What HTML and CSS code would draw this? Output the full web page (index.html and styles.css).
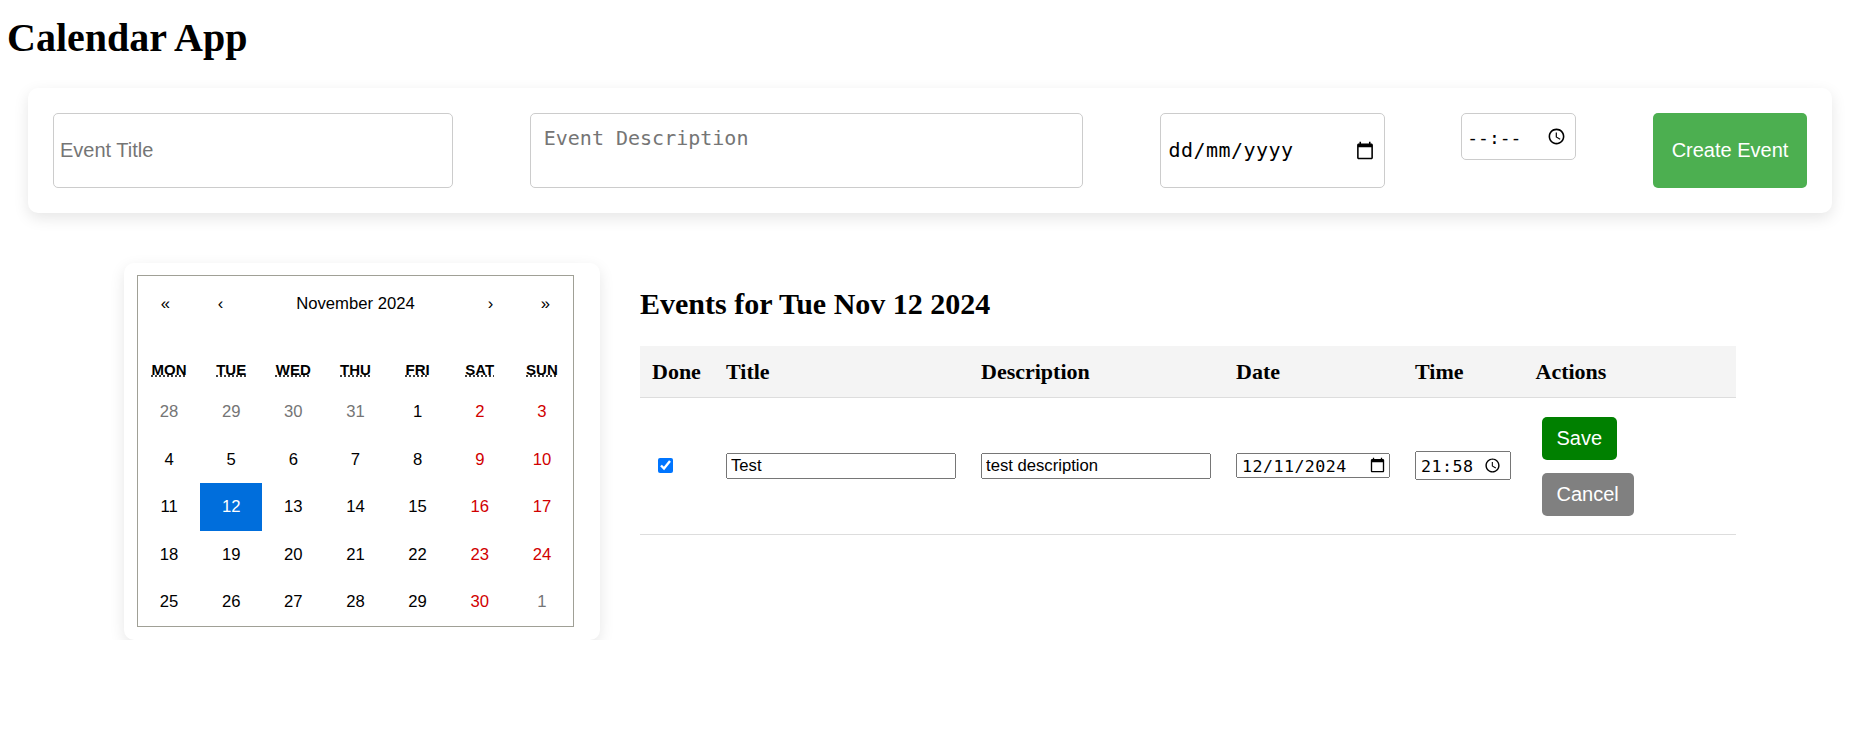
FILE: index.html
```html
<!DOCTYPE html>
<html lang="en-GB">
<head>
<meta charset="utf-8">
<title>Calendar App</title>
<link rel="stylesheet" href="styles.css">
</head>
<body>
<h1 class="app-title">Calendar App</h1>
<form class="event-form">
  <input class="field field-title" type="text" placeholder="Event Title">
  <textarea class="field field-desc" placeholder="Event Description"></textarea>
  <label class="dt">
    <input class="field field-date" type="date">
    <span class="dt-text dt-form-date">dd/mm/yyyy</span>
  </label>
  <label class="dt">
    <input class="field field-time" type="time">
    <span class="dt-text dt-form-time">--:--</span>
  </label>
  <button class="create-btn" type="button">Create Event</button>
</form>
<main class="content">
  <section class="calendar-card">
    <div class="calendar">
      <div class="nav">
        <span class="nav-btn">«</span><span class="nav-btn">‹</span>
        <span class="nav-label">November 2024</span>
        <span class="nav-btn">›</span><span class="nav-btn">»</span>
      </div>
      <div class="weekdays">
        <abbr>MON</abbr><abbr>TUE</abbr><abbr>WED</abbr><abbr>THU</abbr><abbr>FRI</abbr><abbr>SAT</abbr><abbr>SUN</abbr>
      </div>
      <div class="days">
        <span class="day muted">28</span><span class="day muted">29</span><span class="day muted">30</span><span class="day muted">31</span><span class="day">1</span><span class="day weekend">2</span><span class="day weekend">3</span>
        <span class="day">4</span><span class="day">5</span><span class="day">6</span><span class="day">7</span><span class="day">8</span><span class="day weekend">9</span><span class="day weekend">10</span>
        <span class="day">11</span><span class="day active">12</span><span class="day">13</span><span class="day">14</span><span class="day">15</span><span class="day weekend">16</span><span class="day weekend">17</span>
        <span class="day">18</span><span class="day">19</span><span class="day">20</span><span class="day">21</span><span class="day">22</span><span class="day weekend">23</span><span class="day weekend">24</span>
        <span class="day">25</span><span class="day">26</span><span class="day">27</span><span class="day">28</span><span class="day">29</span><span class="day weekend">30</span><span class="day muted">1</span>
      </div>
    </div>
  </section>
  <section class="events">
    <h2 class="events-title">Events for Tue Nov 12 2024</h2>
    <table class="events-table">
      <colgroup>
        <col class="c-done"><col class="c-title"><col class="c-desc"><col class="c-date"><col class="c-time"><col class="c-actions">
      </colgroup>
      <thead>
        <tr><th>Done</th><th>Title</th><th>Description</th><th>Date</th><th>Time</th><th>Actions</th></tr>
      </thead>
      <tbody>
        <tr>
          <td><input class="done-check" type="checkbox" checked></td>
          <td><input class="cell-text" type="text" value="Test"></td>
          <td><input class="cell-text" type="text" value="test description"></td>
          <td>
            <label class="dt">
              <input class="cell-date" type="date" value="2024-11-12">
              <span class="dt-text dt-cell-date">12/11/2024</span>
            </label>
          </td>
          <td>
            <label class="dt">
              <input class="cell-time" type="time" value="21:58">
              <span class="dt-text dt-cell-time">21:58</span>
            </label>
          </td>
          <td>
            <div class="actions">
              <button class="btn btn-save" type="button">Save</button>
              <button class="btn btn-cancel" type="button">Cancel</button>
            </div>
          </td>
        </tr>
      </tbody>
    </table>
  </section>
</main>
</body>
</html>
```
FILE: styles.css
```css
* { box-sizing: border-box; }
body { margin: 0; padding: 0 8px; background: #fff; color: #000; font-family: "Liberation Serif", serif; }
.app-title { margin: 0 0 0 -1px; padding: 20px 0 0; font-size: 40px; line-height: 36px; height: 88px; }
.event-form {
  display: flex; justify-content: space-between; align-items: flex-start;
  margin: 0 17px 0 20px; padding: 25px; height: 125px; background: #fff;
  border-radius: 10px; box-shadow: 0 5px 15px rgba(0,0,0,.1);
}
.field { display: block; border: 1px solid #ccc; border-radius: 5px; background: #fff; margin: 0; }
.field-title { width: 400px; height: 75px; padding: 6px; font: 20px "Liberation Sans", sans-serif; }
.field-desc { width: 553px; height: 75px; padding: 13px; font: 20px/23px "DejaVu Sans Mono", monospace; resize: none; }
.field-date { width: 225px; height: 75px; padding: 6px 7px 6px 6px; font: 20px "DejaVu Sans Mono", monospace; }
.field-time { width: 115px; height: 47px; padding: 6px; font: 18px "DejaVu Sans Mono", monospace; }
.dt { display: block; position: relative; }
.dt input::-webkit-datetime-edit { opacity: 0; }
.dt input::-webkit-datetime-edit-fields-wrapper { display: none; }
.dt-text { position: absolute; left: 9px; top: calc(50% - 1px); transform: translateY(-50%); pointer-events: none; color: #000; font-family: "DejaVu Sans Mono", monospace; letter-spacing: .45px; white-space: nowrap; }
.dt-form-date { font-size: 20px; }
.dt-form-time { font-size: 18px; left: 6px; top: 50%; letter-spacing: 0; }
.dt-cell-date, .dt-cell-time { font-size: 16.66px; left: 6px; top: 50%; }
.create-btn {
  width: 154px; height: 75px; border: 0; border-radius: 5px; background: #4caf50; color: #fff;
  font: 20px "Liberation Sans", sans-serif;
}
.content { display: flex; gap: 40px; margin: 50px 0 0 116px; align-items: flex-start; }
.calendar-card {
  flex: none; width: 476px; padding: 12px 26px 13px 13px; background: #fff; border-radius: 10px;
  box-shadow: 0 5px 15px rgba(0,0,0,.1);
}
.calendar { border: 1px solid #a0a096; font-family: "Liberation Sans", Arial, sans-serif; font-size: 16.66px; line-height: 19px; height: 352px; }
.nav { display: flex; align-items: center; height: 54px; margin-bottom: 21px; }
.nav-btn { width: 55px; text-align: center; font-size: 16.66px; }
.nav-label { flex: 1; text-align: center; }
.weekdays { display: grid; grid-template-columns: repeat(7, 1fr); height: 37px; align-items: center; text-align: center; font-size: 15px; font-weight: 700; }
.weekdays abbr { text-decoration: underline dotted; }
.days { display: grid; grid-template-columns: repeat(7, 1fr); grid-auto-rows: 47.5px; }
.day { display: flex; align-items: center; justify-content: center; }
.muted { color: #757575; }
.weekend { color: #d10000; }
.active { background: #006edc; color: #fff; }
.events { flex: none; width: 1096px; }
.events-title { margin: 0; padding-top: 24px; height: 83px; font-size: 30px; line-height: 34px; }
.events-table { width: 100%; table-layout: fixed; border-collapse: collapse; }
.c-done { width: 74px; } .c-title { width: 255px; } .c-desc { width: 255px; }
.c-date { width: 179px; } .c-time { width: 120.5px; }
.events-table th { height: 51px; padding: 2px 12px 0; text-align: left; background: #f4f4f4; border-bottom: 1px solid #ddd; font-size: 22px; }
.events-table td { height: 137px; padding: 0 12px; border-bottom: 1px solid #ddd; vertical-align: middle; }
.done-check { width: 15px; height: 15px; margin: 0 0 0 6px; display: block; }
.cell-text { display: block; width: 230px; height: 26px; padding: 1px 3px; font: 16.66px "Liberation Sans", sans-serif; }
.cell-date { display: block; width: 154px; height: 25px; font: 16.66px "DejaVu Sans Mono", monospace; }
.cell-time { display: block; width: 96px; height: 29px; padding: 1px 5px 1px 2px; font: 16.66px "DejaVu Sans Mono", monospace; }
.actions { display: flex; flex-direction: column; align-items: flex-start; gap: 13px; margin: 2px 0 0 6px; }
.btn { border: 0; border-radius: 5px; padding: 10px 15px; color: #fff; font: 20px "Liberation Sans", sans-serif; }
.btn-save { background: #008000; }
.btn-cancel { background: #808080; }
```
